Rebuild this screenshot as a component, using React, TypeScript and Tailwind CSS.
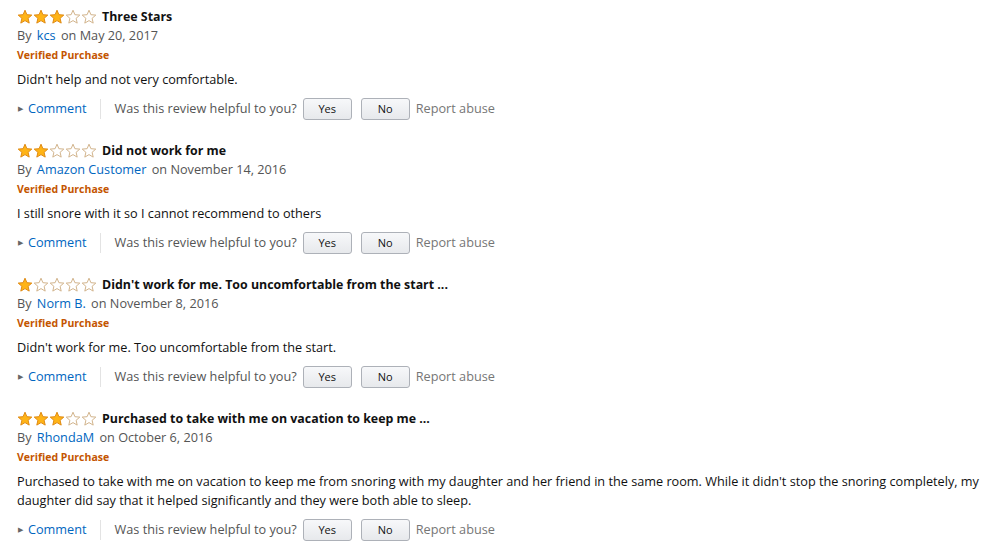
import React from "react";

type Review = {
  stars: number;
  title: string;
  author: string;
  date: string;
  body: string;
};

const reviews: Review[] = [
  {
    stars: 3,
    title: "Three Stars",
    author: "kcs",
    date: "May 20, 2017",
    body: "Didn't help and not very comfortable.",
  },
  {
    stars: 2,
    title: "Did not work for me",
    author: "Amazon Customer",
    date: "November 14, 2016",
    body: "I still snore with it so I cannot recommend to others",
  },
  {
    stars: 1,
    title: "Didn't work for me. Too uncomfortable from the start ...",
    author: "Norm B.",
    date: "November 8, 2016",
    body: "Didn't work for me. Too uncomfortable from the start.",
  },
  {
    stars: 3,
    title: "Purchased to take with me on vacation to keep me ...",
    author: "RhondaM",
    date: "October 6, 2016",
    body: "Purchased to take with me on vacation to keep me from snoring with my daughter and her friend in the same room. While it didn't stop the snoring completely, my daughter did say that it helped significantly and they were both able to sleep.",
  },
];

const Star = ({ filled }: { filled: boolean }) => (
  <svg width="16" height="16" viewBox="0 0 16 16" className="block">
    <path
      d="M8 1.2 L9.9 5.7 L14.8 6.1 L11.1 9.3 L12.2 14.1 L8 11.6 L3.8 14.1 L4.9 9.3 L1.2 6.1 L6.1 5.7 Z"
      fill={filled ? "#ffb416" : "#ffffff"}
      stroke={filled ? "#e08a12" : "#d2b48c"}
      strokeWidth="1"
      strokeLinejoin="round"
    />
  </svg>
);

const ReviewItem = ({ r }: { r: Review }) => (
  <div className="flex flex-col">
    <div className="flex items-center h-[19px]">
      <div className="flex">
        {[1, 2, 3, 4, 5].map((i) => (
          <Star key={i} filled={i <= r.stars} />
        ))}
      </div>
      <span className="ml-[5px] font-bold text-[12.4px] leading-[19px] text-[#111]">{r.title}</span>
    </div>
    <div className="h-[19px] leading-[19px] text-[12.7px] text-[#555]">
      By <span className="text-[#0066c0] mx-[2px]">{r.author}</span> on {r.date}
    </div>
    <div className="h-[20px] leading-[20px] text-[10.5px] font-bold text-[#c45500]">
      Verified Purchase
    </div>
    <p className="mt-[5px] text-[12.7px] leading-[19px] text-[#111] pr-[4px]">{r.body}</p>
    <div className="flex items-center mt-[7px] h-[26px] text-[12.7px]">
      <span className="text-[#666] text-[7px] mr-[5px] ml-[1px]">▶</span>
      <span className="text-[#0066c0]">Comment</span>
      <span className="ml-[13px] mr-[14px] w-px h-[20px] bg-[#e3e3e3]" />
      <span className="text-[#555]">Was this review helpful to you?</span>
      <button className="ml-[6px] w-[49px] h-[22px] rounded-[3px] border border-[#adb1b8] bg-gradient-to-b from-[#f7f8fa] to-[#e7e9ec] text-[11px] text-[#111]">
        Yes
      </button>
      <button className="ml-[9px] w-[49px] h-[22px] rounded-[3px] border border-[#adb1b8] bg-gradient-to-b from-[#f7f8fa] to-[#e7e9ec] text-[11px] text-[#111]">
        No
      </button>
      <span className="ml-[6px] text-[#767676]">Report abuse</span>
    </div>
  </div>
);

export default function App() {
  return (
    <div
      className="w-[1004px] h-[541px] bg-white pl-[17px] pt-[7px] overflow-hidden"
      style={{ fontFamily: '"Open Sans", "Liberation Sans", Arial, sans-serif' }}
    >
      <div className="flex flex-col gap-[19px] w-[980px]">
        {reviews.map((r, i) => (
          <ReviewItem key={i} r={r} />
        ))}
      </div>
    </div>
  );
}
